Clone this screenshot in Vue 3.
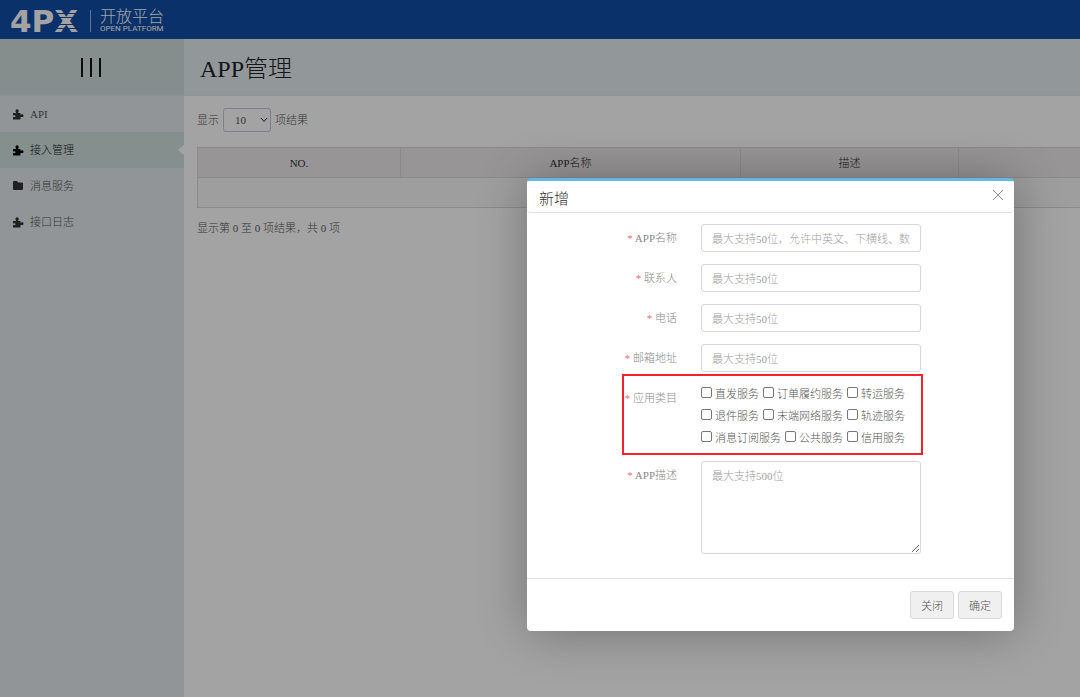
<script setup>
import { ref } from 'vue'

const menu = [
  { name: 'API', icon: 'puzzle', active: false },
  { name: '接入管理', icon: 'puzzle', active: true },
  { name: '消息服务', icon: 'folder', active: false },
  { name: '接口日志', icon: 'puzzle', active: false }
]

const fields = [
  { id: 'app-name', label: 'APP名称', hint: '最大支持50位，允许中英文、下横线、数字' },
  { id: 'contact', label: '联系人', hint: '最大支持50位' },
  { id: 'phone', label: '电话', hint: '最大支持50位' },
  { id: 'email', label: '邮箱地址', hint: '最大支持50位' }
]

const categories = [
  ['直发服务', '订单履约服务', '转运服务'],
  ['退件服务', '末端网络服务', '轨迹服务'],
  ['消息订阅服务', '公共服务', '信用服务']
]

const pageSize = ref('10')
const picked = ref([])
</script>

<template>
  <div class="page">
    <header class="topbar">
      <svg class="logo" width="72" height="36" viewBox="0 0 72 36" role="img" aria-label="4PX">
        <text x="0" y="29" class="logo-text">4PX</text>
        <path class="slits" d="M46 10.500h26M46 14.500h26M46 21.500h26M46 25.500h26" />
      </svg>
      <span class="divider"></span>
      <div class="brand">
        <span class="brand-cn">开放平台</span>
        <span class="brand-en">OPEN PLATFORM</span>
      </div>
    </header>

    <div class="body">
      <aside class="sidebar">
        <button class="toggle" type="button" aria-label="菜单"><i></i><i></i><i></i></button>
        <nav>
          <a v-for="m in menu" :key="m.name" href="#" class="item" :class="{ active: m.active }">
            <svg v-if="m.icon === 'puzzle'" width="12" height="12" viewBox="0 0 12 12">
              <path d="M1 5h2.600c.6 0 .6-.5.200-1C2.900 2.700 3.700 1.200 5.100 1.200S7.300 2.700 6.400 4c-.4.500-.3 1 .3 1H8.400v1c0 .6.500.600 1 .4 1.200-.5 2.200.200 2.200 1.300S10.500 9.400 9.400 9c-.5-.2-1-.1-1 .5v2H1V9.200c.3-.3.600-.2 1-.1.800.2 1.500-.3 1.500-.9S2.800 7.100 2 7.300c-.4.100-.7.200-1-.1z" />
            </svg>
            <svg v-else width="12" height="12" viewBox="0 0 12 12">
              <path d="M1 2a1 1 0 0 1 1-1h3l1.200 1.500H10a1 1 0 0 1 1 1V9a1 1 0 0 1-1 1H2a1 1 0 0 1-1-1z" />
            </svg>
            <span>{{ m.name }}</span>
          </a>
        </nav>
      </aside>

      <main class="main">
        <div class="heading"><h1>APP管理</h1></div>
        <div class="content">
          <label class="length">
            显示
            <span class="select-wrap">
              <select v-model="pageSize"><option>10</option><option>25</option><option>50</option></select>
              <svg width="8" height="6" viewBox="0 0 8 6"><path d="M1 1l3 3.500L7 1" /></svg>
            </span>
            项结果
          </label>
          <table>
            <colgroup><col class="c-no" /><col class="c-name" /><col class="c-desc" /><col /></colgroup>
            <thead><tr><th>NO.</th><th>APP名称</th><th>描述</th><th></th></tr></thead>
            <tbody><tr><td colspan="4"></td></tr></tbody>
          </table>
          <p class="info">显示第 0 至 0 项结果，共 0 项</p>
        </div>
      </main>
    </div>

    <div class="shade">
      <form class="dialog" role="dialog" aria-labelledby="dialog-title" @submit.prevent>
        <div class="dialog-head">
          <h2 id="dialog-title">新增</h2>
          <button class="close" type="button" aria-label="关闭">
            <svg width="12" height="12" viewBox="0 0 12 12"><path d="M1 1l10 10M11 1L1 11" /></svg>
          </button>
        </div>
        <div class="dialog-body">
          <div v-for="f in fields" :key="f.id" class="row">
            <label :for="f.id"><b>*</b> {{ f.label }}</label>
            <input :id="f.id" type="text" :placeholder="f.hint" />
          </div>
          <div class="row category" role="group" aria-labelledby="category-label">
            <span id="category-label" class="label"><b>*</b> 应用类目</span>
            <div class="checks">
              <div v-for="(line, i) in categories" :key="i" class="line">
                <label v-for="c in line" :key="c"><input v-model="picked" type="checkbox" :value="c" /><span>{{ c }}</span></label>
              </div>
            </div>
          </div>
          <div class="row">
            <label for="app-desc"><b>*</b> APP描述</label>
            <textarea id="app-desc" placeholder="最大支持500位"></textarea>
          </div>
        </div>
        <div class="dialog-foot">
          <button type="button">关闭</button>
          <button type="submit">确定</button>
        </div>
      </form>
    </div>
  </div>
</template>

<style>
body {
  margin: 0;
}
</style>

<style scoped>
* {
  box-sizing: border-box;
}
.page {
  position: relative;
  display: flex;
  flex-direction: column;
  min-height: 100vh;
  overflow: hidden;
  background: #fff;
  color: #555;
  font-family: "Liberation Serif", "Noto Sans CJK SC", serif;
  font-size: 11px;
  font-weight: 300;
  line-height: 16px;
}
input,
select,
textarea,
button {
  font: inherit;
  color: inherit;
}
.topbar {
  display: flex;
  align-items: center;
  height: 39px;
  padding: 2px 10px 0;
  background: #104ea6;
  color: #fff;
}
.logo {
  overflow: visible;
}
.logo-text {
  font-family: "DejaVu Sans", sans-serif;
  font-size: 31px;
  font-weight: 700;
  fill: #fff;
}
.slits {
  stroke: #104ea6;
  stroke-width: 1;
}
.divider {
  width: 1px;
  height: 22px;
  margin: 0 9px 0 8px;
  background: #9db8dc;
}
.brand {
  display: flex;
  flex-direction: column;
  gap: 1px;
}
.brand-cn {
  font-family: "Noto Sans CJK SC", sans-serif;
  font-size: 16px;
  font-weight: 300;
  line-height: 16px;
}
.brand-en {
  font-family: Roboto, sans-serif;
  font-size: 8px;
  font-weight: 400;
  line-height: 10px;
  white-space: nowrap;
}
.body {
  display: flex;
  flex: 1;
}
.sidebar {
  flex: none;
  width: 184px;
  background: #e4eaec;
}
.toggle {
  display: flex;
  align-items: center;
  justify-content: center;
  gap: 7px;
  width: 100%;
  height: 57px;
  padding: 0 3px 0 0;
  border: 0;
  border-bottom: 1px solid #dbe4e6;
  background: #d0dedc;
}
.toggle i {
  width: 2px;
  height: 19px;
  background: #111;
}
.item {
  position: relative;
  display: flex;
  align-items: center;
  gap: 6px;
  height: 36px;
  padding-left: 12px;
  color: #555;
  text-decoration: none;
}
.item svg {
  fill: #333;
}
.item.active {
  background: #d0e0dd;
  color: #222;
}
.item.active svg {
  fill: #000;
}
.item.active::after {
  content: "";
  position: absolute;
  top: 13px;
  right: 0;
  border: 5px solid transparent;
  border-left-width: 0;
  border-right: 6px solid #fff;
}
.main {
  flex: 1;
  min-width: 0;
  overflow: hidden;
}
.heading {
  display: flex;
  align-items: center;
  height: 57px;
  padding: 4px 0 0 16px;
  border-bottom: 1px solid #dfe6ee;
  background: #e5ecf1;
}
h1 {
  margin: 0;
  color: #222;
  font-size: 24px;
  font-weight: 300;
  line-height: 32px;
}
.content {
  padding: 12px 0 0 13px;
}
.length {
  display: flex;
  align-items: center;
  gap: 4px;
}
.select-wrap {
  position: relative;
  display: inline-flex;
}
select {
  appearance: none;
  width: 48px;
  height: 24px;
  padding: 0 11px;
  border: 1px solid #c4c8d8;
  border-radius: 3px;
  background: #fff;
}
.select-wrap svg {
  position: absolute;
  top: 9px;
  right: 3px;
  fill: none;
  stroke: #333;
  pointer-events: none;
}
table {
  width: calc(100% + 60px);
  margin-top: 15px;
  border-collapse: collapse;
  table-layout: fixed;
}
.c-no {
  width: 203px;
}
.c-name {
  width: 340px;
}
.c-desc {
  width: 218px;
}
th,
td {
  height: 30px;
  padding: 0;
  border: 1px solid #d9d7da;
}
th {
  background: #eee9ec;
  color: #333;
  font-weight: 300;
}
td {
  background: #f8f8f8;
}
.info {
  margin: 12px 0 0;
}
.shade {
  position: absolute;
  inset: 0;
  background: rgba(0, 0, 0, 0.36);
}
.dialog {
  position: absolute;
  top: 178px;
  right: 66px;
  width: 487px;
  border-top: 3px solid #65b8e0;
  border-radius: 4px;
  background: #fff;
  box-shadow: 1px 1px 50px rgba(0, 0, 0, 0.3);
}
.dialog-head {
  display: flex;
  align-items: center;
  justify-content: space-between;
  height: 32px;
  padding: 4px 10px 0 12px;
  border-bottom: 1px solid #e3e3e3;
  border-radius: 4px;
}
h2 {
  margin: 0;
  color: #333;
  font-size: 15px;
  font-weight: 300;
  line-height: 20px;
}
.close {
  display: flex;
  height: 20px;
  padding: 0;
  border: 0;
  background: none;
}
.close svg {
  fill: none;
  stroke: #999;
}
.dialog-body {
  padding: 11px 0 24px;
}
.row {
  position: relative;
  display: grid;
  grid-template-columns: 150px 220px;
  column-gap: 24px;
  margin-bottom: 12px;
}
.row > label,
.label {
  padding-top: 1px;
  color: #888;
  line-height: 27px;
  text-align: right;
}
b {
  color: #ec6a75;
  font-weight: 400;
}
.row > input,
textarea {
  width: 100%;
  height: 28px;
  padding: 1px 10px 0;
  border: 1px solid #d5d7e3;
  border-radius: 3px;
  background: #fff;
}
textarea {
  display: block;
  height: 93px;
  padding-top: 6px;
  resize: vertical;
}
::placeholder {
  color: #a0a0a0;
  opacity: 1;
}
.category {
  margin-top: -2px;
  margin-bottom: 13px;
}
.category::before {
  content: "";
  position: absolute;
  box-sizing: border-box;
  top: -8px;
  bottom: -7px;
  left: 95px;
  width: 301px;
  border: 2px solid #f5222d;
}
.label {
  padding-top: 3px;
}
.line {
  display: flex;
  gap: 4px;
  height: 22px;
}
.line label {
  display: flex;
  align-items: center;
  gap: 3px;
  padding-top: 1px;
  white-space: nowrap;
}
.line input {
  appearance: none;
  width: 11px;
  height: 11px;
  margin: 0 0 3px;
  border: 1px solid #777;
  border-radius: 2px;
  background: #fff;
}
.line input:checked {
  background: #2f7de1;
}
.row:last-child {
  margin-bottom: 0;
}
.dialog-foot {
  display: flex;
  justify-content: flex-end;
  gap: 4px;
  padding: 12px;
  border-top: 1px solid #dedede;
}
.dialog-foot button {
  width: 44px;
  height: 28px;
  padding: 1px 0 0;
  border: 1px solid #d9d9d9;
  border-radius: 3px;
  background: #f0f0f0;
}
</style>
